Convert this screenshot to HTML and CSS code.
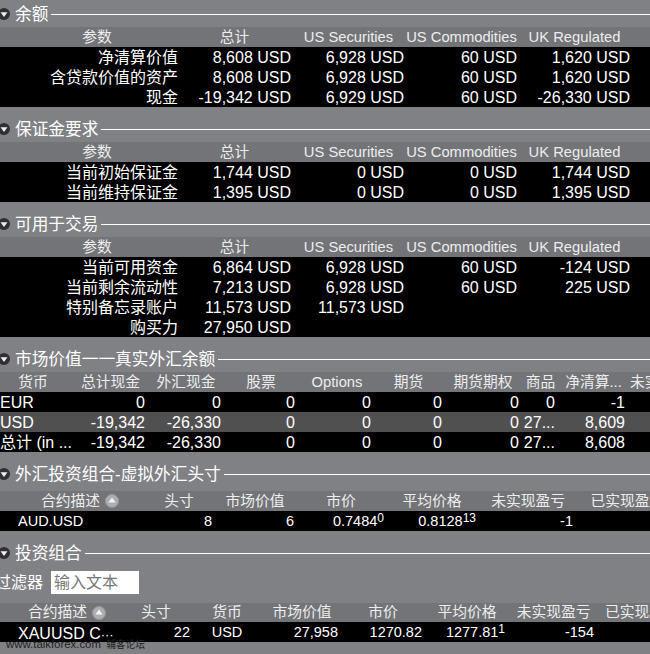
FILE: index.html
```html
<!DOCTYPE html>
<html lang="zh">
<head>
<meta charset="utf-8">
<title>账户</title>
<link rel="stylesheet" href="styles.css">
</head>
<body>
<main class="page">

<section class="section">
  <h2 class="title"><svg class="caret" viewBox="0 0 12 12"><circle cx="6" cy="6" r="6"/><path d="M2.5 4.2h7L6 9z"/></svg><span>余额</span><i class="rule"></i></h2>
  <div class="grid summary head"><span>参数</span><span>总计</span><span>US Securities</span><span>US Commodities</span><span>UK Regulated</span></div>
  <div class="grid summary row"><span>净清算价值</span><span>8,608 USD</span><span>6,928 USD</span><span>60 USD</span><span>1,620 USD</span></div>
  <div class="grid summary row"><span>含贷款价值的资产</span><span>8,608 USD</span><span>6,928 USD</span><span>60 USD</span><span>1,620 USD</span></div>
  <div class="grid summary row"><span>现金</span><span>-19,342 USD</span><span>6,929 USD</span><span>60 USD</span><span>-26,330 USD</span></div>
</section>

<section class="section">
  <h2 class="title"><svg class="caret" viewBox="0 0 12 12"><circle cx="6" cy="6" r="6"/><path d="M2.5 4.2h7L6 9z"/></svg><span>保证金要求</span><i class="rule"></i></h2>
  <div class="grid summary head"><span>参数</span><span>总计</span><span>US Securities</span><span>US Commodities</span><span>UK Regulated</span></div>
  <div class="grid summary row"><span>当前初始保证金</span><span>1,744 USD</span><span>0 USD</span><span>0 USD</span><span>1,744 USD</span></div>
  <div class="grid summary row"><span>当前维持保证金</span><span>1,395 USD</span><span>0 USD</span><span>0 USD</span><span>1,395 USD</span></div>
</section>

<section class="section">
  <h2 class="title"><svg class="caret" viewBox="0 0 12 12"><circle cx="6" cy="6" r="6"/><path d="M2.5 4.2h7L6 9z"/></svg><span>可用于交易</span><i class="rule"></i></h2>
  <div class="grid summary head"><span>参数</span><span>总计</span><span>US Securities</span><span>US Commodities</span><span>UK Regulated</span></div>
  <div class="grid summary row"><span>当前可用资金</span><span>6,864 USD</span><span>6,928 USD</span><span>60 USD</span><span>-124 USD</span></div>
  <div class="grid summary row"><span>当前剩余流动性</span><span>7,213 USD</span><span>6,928 USD</span><span>60 USD</span><span>225 USD</span></div>
  <div class="grid summary row"><span>特别备忘录账户</span><span>11,573 USD</span><span>11,573 USD</span><span></span><span></span></div>
  <div class="grid summary row"><span>购买力</span><span>27,950 USD</span><span></span><span></span><span></span></div>
</section>

<section class="section">
  <h2 class="title"><svg class="caret" viewBox="0 0 12 12"><circle cx="6" cy="6" r="6"/><path d="M2.5 4.2h7L6 9z"/></svg><span>市场价值一一真实外汇余额</span><i class="rule"></i></h2>
  <div class="grid market head"><span>货币</span><span>总计现金</span><span>外汇现金</span><span>股票</span><span>Options</span><span>期货</span><span>期货期权</span><span>商品</span><span>净清算...</span><span class="trail">未实现</span></div>
  <div class="grid market row"><span class="start">EUR</span><span>0</span><span>0</span><span>0</span><span>0</span><span>0</span><span>0</span><span>0</span><span>-1</span><span></span></div>
  <div class="grid market row alt"><span class="start">USD</span><span>-19,342</span><span>-26,330</span><span>0</span><span>0</span><span>0</span><span>0</span><span>27...</span><span>8,609</span><span></span></div>
  <div class="grid market row"><span class="start">总计 (in ...</span><span>-19,342</span><span>-26,330</span><span>0</span><span>0</span><span>0</span><span>0</span><span>27...</span><span>8,608</span><span></span></div>
</section>

<section class="section">
  <h2 class="title title-gap"><svg class="caret" viewBox="0 0 12 12"><circle cx="6" cy="6" r="6"/><path d="M2.5 4.2h7L6 9z"/></svg><span>外汇投资组合-虚拟外汇头寸</span><i class="rule"></i></h2>
  <div class="grid forex head"><span class="sorted">合约描述<svg class="sort" viewBox="0 0 14 14"><circle cx="7" cy="7" r="6.5"/><path d="M7 3.6 10.6 8.6H3.4z"/></svg></span><span>头寸</span><span>市场价值</span><span>市价</span><span>平均价格</span><span>未实现盈亏</span><span>已实现盈</span></div>
  <div class="grid forex row compact"><span class="start inset">AUD.USD</span><span>8</span><span>6</span><span>0.7484<sup>0</sup></span><span>0.8128<sup>13</sup></span><span>-1</span><span></span></div>
</section>

<section class="section">
  <h2 class="title"><svg class="caret" viewBox="0 0 12 12"><circle cx="6" cy="6" r="6"/><path d="M2.5 4.2h7L6 9z"/></svg><span>投资组合</span><i class="rule"></i></h2>
  <div class="filter"><label class="filter-label" for="q">过滤器</label><input id="q" class="filter-input" placeholder="输入文本"></div>
  <div class="grid folio head"><span class="sorted">合约描述<svg class="sort" viewBox="0 0 14 14"><circle cx="7" cy="7" r="6.5"/><path d="M7 3.6 10.6 8.6H3.4z"/></svg></span><span>头寸</span><span>货币</span><span>市场价值</span><span>市价</span><span>平均价格</span><span>未实现盈亏</span><span>已实现盈</span></div>
  <div class="grid folio row compact"><span class="start inset big">XAUUSD C<small>···</small></span><span>22</span><span class="mid">USD</span><span>27,958</span><span>1270.82</span><span>1277.81<sup>1</sup></span><span>-154</span><span></span></div>
</section>

</main>
<div class="watermark">www.talkforex.com <span class="watermark-cn">辅客论坛</span></div>
</body>
</html>
```
FILE: styles.css
```css
* { box-sizing: border-box; }
html, body { margin: 0; height: 100%; }
body {
  background: #808185;
  color: #fff;
  font-family: "Liberation Sans", "Noto Sans CJK SC", sans-serif;
  font-size: 16px;
  overflow: hidden;
  position: relative;
}
.page { width: 650px; overflow: hidden; }
.section { margin-bottom: 8px; }

.title {
  display: flex;
  align-items: center;
  height: 27px;
  margin: 0;
  font-size: 16.7px;
  font-weight: 400;
  line-height: 27px;
  white-space: nowrap;
}
.title > span { margin-top: 1px; }
.title-gap { margin-bottom: 4px; }
.caret { flex: none; width: 12px; height: 12px; margin: 1px 5px 0 -2px; fill: #303034; }
.caret path { fill: #eee; }
.rule { flex: 1; height: 1px; margin: 2px 0 0 3px; background: #fff; }

.grid { display: grid; height: 20px; line-height: 20px; white-space: nowrap; }
.grid > span { min-width: 0; }
.summary { grid-template-columns: 178px 113px 113px 113px 113px 20px; }
.market.head { grid-template-columns: 66px 89px 62px 88px 64px 79px 70px 45px 61px 40px; }
.market.row { grid-template-columns: 67px 80px 76px 74px 76px 71px 77px 36px 70px 23px; }
.forex.head { grid-template-columns: 146px 66px 86px 86px 96px 96px 88px; }
.forex.row { grid-template-columns: 148px 64px 82px 90px 92px 97px 77px; }
.folio.head { height: 19px; line-height: 19px; grid-template-columns: 124px 64px 78px 72px 90px 78px 95px 67px; }
.folio.row { grid-template-columns: 126px 64px 74px 74px 84px 83px 89px 56px; }

.head { background: #737478; color: #eceded; font-size: 14.75px; text-align: center; }
.row { background: #000; text-align: right; padding-top: 1px; }
.row.compact { font-size: 14.5px; padding-top: 0; }
.market.row > span { padding-right: 2px; }
.summary.head > span:first-child { padding-left: 16px; }
.summary.head > span:nth-child(n + 3) { padding-left: 2px; }
.head > .trail { text-align: left; padding-left: 6px; overflow: hidden; }
.alt { background: #505050; }
.row > .start { text-align: left; padding-right: 0; }
.row > .inset { padding-left: 18px; }
.row > .mid { text-align: center; }
.row > .big { font-size: 16px; line-height: 24px; }
.big small { font-size: 13px; }

.sorted { display: flex; align-items: center; padding-left: 41px; }
.folio .sorted { padding-left: 28px; }
.sort { flex: none; width: 14px; height: 14px; margin-left: 5px; fill: #adaeb1; stroke: #97989c; }
.sort path { fill: #f4f4f4; stroke: none; }
sup { font-size: 12px; line-height: 0; vertical-align: 4px; }

.filter { display: flex; align-items: flex-start; height: 37px; padding-top: 5px; }
.filter-label { flex: none; width: 48px; margin: 0 8px 0 -5px; font-size: 16px; line-height: 23px; }
.filter-input {
  width: 88px;
  height: 23px;
  border: 0;
  padding: 0 3px;
  background: #fff;
  font: 16px "Liberation Sans", "Noto Sans CJK SC", sans-serif;
}
.filter-input::placeholder { color: #777; opacity: 1; }

.watermark {
  position: absolute;
  left: 6px;
  top: 637px;
  color: #222;
  font-size: 11.4px;
  line-height: 14px;
  white-space: nowrap;
}
.watermark-cn { margin-left: 2px; font-size: 9.75px; }
```
